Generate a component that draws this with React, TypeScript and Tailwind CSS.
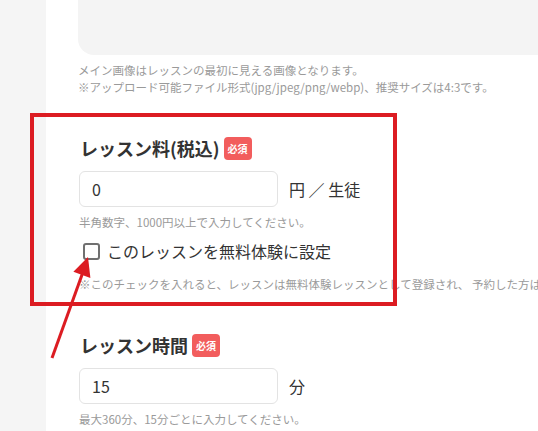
import React from 'react';

const font = { fontFamily: '"Noto Sans CJK JP", "Noto Sans", sans-serif' };

const Badge = () => (
  <span className="inline-flex h-[23px] w-[28px] items-center justify-center rounded-[4px] bg-[#f25d5d] text-[10px] font-bold text-white">
    必須
  </span>
);

const App: React.FC = () => {
  return (
    <div style={font} className="relative flex h-[431px] w-[538px] overflow-hidden bg-[#f5f5f5] text-[#333]">
      <div className="w-[46px] shrink-0" />
      <div className="flex-1 bg-white pl-[32px]">
        <div className="-mt-[100px] h-[155px] w-[520px] rounded-[16px] bg-[#f4f4f4]" />
        <div className="mt-[7px] whitespace-nowrap text-[11.5px] leading-[17px] text-[#9a9a9a]">
          <p>メイン画像はレッスンの最初に見える画像となります。</p>
          <p>※アップロード可能ファイル形式(jpg/jpeg/png/webp)、推奨サイズは4:3です。</p>
        </div>

        {/* レッスン料 */}
        <div className="mt-[40px] flex h-[24px] items-center gap-[4px] pl-[2px]">
          <h3 className="text-[18px] font-bold leading-[24px]">レッスン料(税込)</h3>
          <Badge />
        </div>
        <div className="mt-[11px] flex items-center gap-[11px] pl-[1px]">
          <input
            readOnly
            value="0"
            className="h-[36px] w-[199px] rounded-[6px] border border-[#e3e3e3] px-[12px] text-[16px] outline-none"
          />
          <span className="text-[16px]">円 ／ 生徒</span>
        </div>
        <p className="mt-[7px] pl-[1px] text-[11.5px] leading-[17px] text-[#9a9a9a]">
          半角数字、1000円以上で入力してください。
        </p>
        <label className="mt-[8px] flex h-[24px] items-center gap-[7px] pl-[5px]">
          <span className="h-[17px] w-[17px] rounded-[3px] border-2 border-[#707070] bg-white" />
          <span className="text-[16px]">このレッスンを無料体験に設定</span>
        </label>
        <p className="mt-[13px] whitespace-nowrap pl-[1px] text-[11.5px] leading-[17px] text-[#9a9a9a]">
          ※このチェックを入れると、レッスンは無料体験レッスンとして登録され、 予約した方は無料でレッスンを受講できます。
        </p>

        {/* レッスン時間 */}
        <div className="mt-[40px] flex h-[24px] items-center gap-[4px] pl-[2px]">
          <h3 className="text-[18px] font-bold leading-[24px]">レッスン時間</h3>
          <Badge />
        </div>
        <div className="mt-[11px] flex items-center gap-[11px] pl-[1px]">
          <input
            readOnly
            value="15"
            className="h-[36px] w-[199px] rounded-[6px] border border-[#e3e3e3] px-[12px] text-[16px] outline-none"
          />
          <span className="text-[16px]">分</span>
        </div>
        <p className="mt-[7px] pl-[1px] text-[11.5px] leading-[17px] text-[#9a9a9a]">
          最大360分、15分ごとに入力してください。
        </p>
      </div>

      {/* annotation */}
      <div className="absolute left-[30px] top-[113px] h-[193px] w-[367px] border-4 border-[#dc1c22]" />
      <svg className="absolute left-0 top-0" width="538" height="431" viewBox="0 0 538 431">
        <line x1="52" y1="358" x2="83" y2="272" stroke="#dc1c22" strokeWidth="3" />
        <polygon points="88,257 73.4,271.8 90.4,278" fill="#dc1c22" />
      </svg>
    </div>
  );
};

export default App;
